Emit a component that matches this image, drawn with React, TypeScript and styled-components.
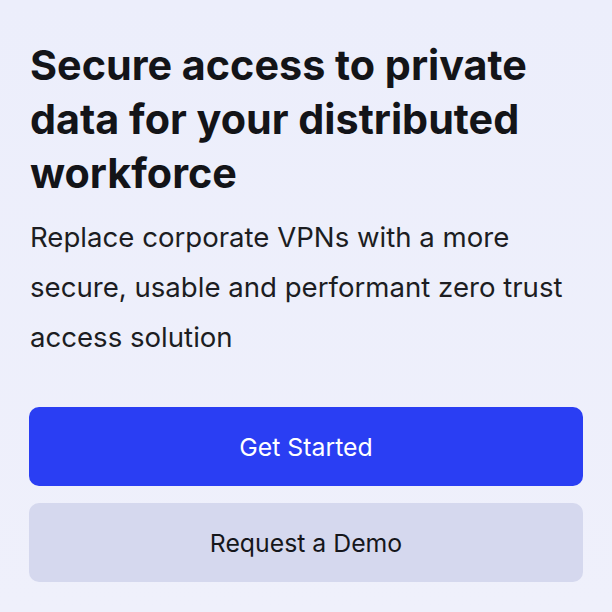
import styled, { createGlobalStyle } from "styled-components";

const GlobalStyle = createGlobalStyle`
  html, body {
    margin: 0;
    padding: 0;
  }
  body {
    background: linear-gradient(180deg, #eceefb 0%, #eff0fb 100%);
    font-family: Inter, "Noto Sans", sans-serif;
    color: #16171c;
  }
`;

const Page = styled.main`
  width: 612px;
  height: 612px;
  box-sizing: border-box;
  padding: 38px 29px 0 29px;
  display: flex;
  flex-direction: column;
`;

const Heading = styled.h1`
  margin: 0 0 0 1px;
  font-size: 41.3px;
  line-height: 54px;
  font-weight: 700;
  letter-spacing: 0;
  color: #131418;
`;

const Lead = styled.p`
  margin: 12px 0 0 1px;
  font-size: 27.6px;
  line-height: 50px;
  font-weight: 400;
  color: #1c1d22;
`;

const Actions = styled.div`
  margin-top: 45px;
  display: flex;
  flex-direction: column;
  gap: 17px;
`;

const Button = styled.button<{ $primary?: boolean }>`
  height: 79px;
  width: 100%;
  border: none;
  border-radius: 10px;
  font-family: Inter, "Noto Sans", sans-serif;
  font-size: 24.8px;
  font-weight: 400;
  background: ${(p) => (p.$primary ? "#2a3ef3" : "#d5d8ee")};
  color: ${(p) => (p.$primary ? "#ffffff" : "#15161b")};
  cursor: pointer;
`;

export default function App() {
  return (
    <>
      <GlobalStyle />
      <Page>
        <Heading>
          Secure access to private data for your distributed workforce
        </Heading>
        <Lead>
          Replace corporate VPNs with a more secure, usable and performant zero
          trust access solution
        </Lead>
        <Actions>
          <Button $primary>Get Started</Button>
          <Button>Request a Demo</Button>
        </Actions>
      </Page>
    </>
  );
}
